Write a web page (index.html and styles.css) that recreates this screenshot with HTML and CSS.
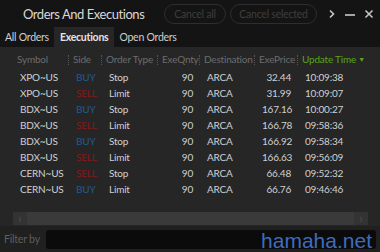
FILE: index.html
```html
<!DOCTYPE html>
<html lang="en">
<head>
    <meta charset="UTF-8">
    <title>Orders And Executions</title>
    <link rel="stylesheet" href="styles.css">
</head>
<body>
    <div class="window">
        <div class="titlebar">
            <div class="title">Orders And Executions</div>
            <button class="pill">Cancel all</button>
            <button class="pill wide">Cancel selected</button>
            <div class="controls">
                <svg width="8" height="10" viewBox="0 0 8 10"><path d="M2 1.5 L5.5 5 L2 8.5" stroke="#c8c8c8" stroke-width="1.6" fill="none"/></svg>
                <svg width="12" height="10" viewBox="0 0 12 10"><path d="M1 6 H11" stroke="#c8c8c8" stroke-width="1.6"/></svg>
                <svg width="10" height="10" viewBox="0 0 10 10"><path d="M1.5 1.5 L8.5 8.5 M8.5 1.5 L1.5 8.5" stroke="#c8c8c8" stroke-width="1.5"/></svg>
            </div>
        </div>

        <div class="tabs">
            <div class="tab">All Orders</div>
            <div class="tab active">Executions</div>
            <div class="tab">Open Orders</div>
        </div>

        <div class="grid">
            <div class="row head">
                <div class="cell">Symbol</div>
                <div class="cell sep">Side</div>
                <div class="cell sep">Order Type</div>
                <div class="cell sep">ExeQnty</div>
                <div class="cell sep">Destination</div>
                <div class="cell sep">ExePrice</div>
                <div class="cell sep sorted">Update Time <span class="arrow">&#9660;</span></div>
            </div>
            <div id="rows"></div>
            <div class="hscroll">
                <div class="sbtn">&#8249;</div>
                <div class="strack"></div>
                <div class="sbtn">&#8250;</div>
            </div>
        </div>

        <div class="filter">
            <span>Filter by</span>
            <div class="input"></div>
        </div>

        <div class="watermark">hamaha.net</div>
    </div>

    <script>
        const data = [
            ['XPO~US', 'BUY', 'Stop', 90, 'ARCA', '32.44', '10:09:38'],
            ['XPO~US', 'SELL', 'Limit', 90, 'ARCA', '31.99', '10:09:07'],
            ['BDX~US', 'BUY', 'Stop', 90, 'ARCA', '167.16', '10:00:27'],
            ['BDX~US', 'SELL', 'Limit', 90, 'ARCA', '166.78', '09:58:36'],
            ['BDX~US', 'BUY', 'Stop', 90, 'ARCA', '166.92', '09:58:34'],
            ['BDX~US', 'SELL', 'Limit', 90, 'ARCA', '166.63', '09:56:09'],
            ['CERN~US', 'SELL', 'Stop', 90, 'ARCA', '66.48', '09:52:32'],
            ['CERN~US', 'BUY', 'Limit', 90, 'ARCA', '66.76', '09:46:46']
        ];

        const rows = document.getElementById('rows');
        data.forEach(d => {
            const row = document.createElement('div');
            row.className = 'row';
            row.innerHTML =
                `<div class="cell">${d[0]}</div>` +
                `<div class="cell ${d[1].toLowerCase()}">${d[1]}</div>` +
                `<div class="cell">${d[2]}</div>` +
                `<div class="cell num">${d[3]}</div>` +
                `<div class="cell">${d[4]}</div>` +
                `<div class="cell num">${d[5]}</div>` +
                `<div class="cell">${d[6]}</div>`;
            rows.appendChild(row);
        });
    </script>
</body>
</html>
```

FILE: styles.css
```css
* {
    margin: 0;
    padding: 0;
    box-sizing: border-box;
}

body {
    font-family: Lato, sans-serif;
    background: #141414;
    width: 380px;
    height: 252px;
    overflow: hidden;
    letter-spacing: -0.2px;
}

.window {
    position: relative;
    height: 252px;
    display: flex;
    flex-direction: column;
}

.titlebar {
    height: 27px;
    display: flex;
    align-items: center;
    background: #141414;
}

.title {
    color: #d8d8d8;
    font-size: 13px;
    letter-spacing: -0.45px;
    padding-left: 23px;
    width: 164px;
}

.pill {
    height: 20px;
    width: 62px;
    border: 1.5px solid #2e2e2e;
    border-radius: 10px;
    background: none;
    color: #3e3e3e;
    font-family: Lato, sans-serif;
    font-size: 10.5px;
    letter-spacing: -0.25px;
    margin-right: 4px;
}

.pill.wide {
    width: 87px;
}

.controls {
    display: flex;
    align-items: center;
    gap: 8px;
    margin-left: 7px;
}

.tabs {
    height: 20px;
    display: flex;
}

.tab {
    color: #cfcfcf;
    font-size: 10.5px;
    letter-spacing: -0.25px;
    padding: 0 5px;
    line-height: 20px;
}

.tab.active {
    background: #262626;
    color: #e4e4e4;
    font-weight: 700;
    padding: 0 6px;
}

.grid {
    background: #262626;
    height: 179px;
    padding-top: 3px;
    padding-left: 12px;
}

.row {
    display: grid;
    grid-template-columns: 56px 33px 56px 42px 55px 43px 1fr;
    height: 16px;
    line-height: 16px;
    font-size: 10px;
    color: #d0d0d0;
}

.row .cell {
    padding-left: 8px;
    white-space: nowrap;
}

.row.head {
    height: 19px;
    line-height: 19px;
    color: #6c6c6c;
}

.row.head .cell {
    padding-left: 5px;
    position: relative;
}

.row.head .sep::before {
    content: '';
    position: absolute;
    left: 0;
    top: 5px;
    height: 10px;
    border-left: 1px dotted #555;
}

.row.head .sorted {
    color: #5aa31c;
}

.arrow {
    font-size: 7px;
    vertical-align: 1px;
}

.row .num {
    text-align: right;
    padding-right: 6px;
}

.buy {
    color: #245a8c;
}

.sell {
    color: #861818;
}

.hscroll {
    display: flex;
    height: 13px;
    margin-top: 15px;
    margin-left: 1px;
    width: 355px;
    background: #3a3a3a;
}

.sbtn {
    width: 14px;
    background: #333;
    color: #4f4f4f;
    font-size: 13px;
    line-height: 12px;
    text-align: center;
}

.strack {
    flex: 1;
}

.filter {
    flex: 1;
    display: flex;
    align-items: center;
    gap: 6px;
    padding: 2px 4px;
    background: #202020;
}

.filter span {
    color: #5e5e5e;
    font-size: 10.5px;
}

.input {
    flex: 1;
    height: 19px;
    background: #0b0b0b;
    border-radius: 3px;
}

.watermark {
    position: absolute;
    right: 8px;
    bottom: 0;
    font-family: 'Liberation Sans', sans-serif;
    font-size: 21px;
    line-height: 22px;
    letter-spacing: 0;
    color: #3f6cbd;
}
```
